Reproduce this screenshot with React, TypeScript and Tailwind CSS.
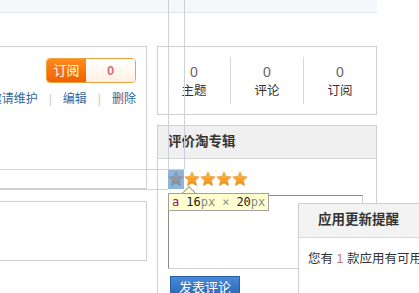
function Star({ gray }: { gray?: boolean }) {
  const id = gray ? "sg" : "so";
  return (
    <svg width="16" height="16" viewBox="0 0 16 16">
      <defs>
        <linearGradient id={id} x1="0" y1="0" x2="0" y2="1">
          <stop offset="0" stopColor={gray ? "#9aa6b0" : "#ffc04a"} />
          <stop offset="1" stopColor={gray ? "#7f8d99" : "#f38a10"} />
        </linearGradient>
      </defs>
      <path
        d="M8 0.8 L10.1 5.4 L15.2 5.9 L11.4 9.3 L12.5 14.6 L8 12 L3.5 14.6 L4.6 9.3 L0.8 5.9 L5.9 5.4 Z"
        fill={`url(#${id})`}
        stroke={gray ? "#7d8a95" : "#e58a1c"}
        strokeWidth="0.6"
      />
    </svg>
  );
}

const stats = [
  { n: "0", label: "主题" },
  { n: "0", label: "评论" },
  { n: "0", label: "订阅" },
];

export default function App() {
  return (
    <div
      className="relative w-[419px] h-[293px] overflow-hidden bg-white text-[12px] text-[#333]"
      style={{ fontFamily: '"Liberation Sans", "Noto Sans CJK SC", sans-serif' }}
    >
      <div className="h-[13px] w-[377px] bg-[#f5f7fa] border-b border-[#e3e7ec]" />

      <div className="flex mt-[33px]">
        {/* left column */}
        <div className="w-[147px] shrink-0">
          <div className="h-[144px] border-t border-r border-b-2 border-[#cfcfcf] pt-[11px] pr-[10px]">
            <div className="flex justify-end">
              <div className="flex h-[25px] w-[90px] rounded-[4px] overflow-hidden border border-[#f0a040]">
                <div className="w-[39px] flex items-center justify-center text-white text-[13px] bg-gradient-to-b from-[#ff8a1a] to-[#f06000]">
                  订阅
                </div>
                <div className="flex-1 flex items-center justify-center text-[13px] font-bold text-[#d97070] bg-gradient-to-b from-white to-[#fff1e4]">
                  0
                </div>
              </div>
            </div>
            <div className="flex justify-end items-center mt-[7px] text-[12px] text-[#336699] whitespace-nowrap">
              <span>邀请维护</span>
              <span className="mx-[11px] text-[#ccc]">|</span>
              <span>编辑</span>
              <span className="mx-[11px] text-[#ccc]">|</span>
              <span>删除</span>
            </div>
          </div>
          <div className="mt-[11px] h-[60px] border-t border-r border-b border-[#cfcfcf]" />
        </div>

        {/* right column */}
        <div className="ml-[10px] w-[220px] shrink-0">
          <div className="h-[69px] border border-[#cfcfcf] flex items-center">
            {stats.map((s, i) => (
              <div
                key={s.label}
                className={`flex-1 h-[47px] flex flex-col items-center justify-center pt-[4px] ${
                  i > 0 ? "border-l border-[#d8d8d8]" : ""
                }`}
              >
                <div className="text-[14px] text-[#666] leading-[18px]">{s.n}</div>
                <div className="text-[12.5px] leading-[21px] text-[#333]">{s.label}</div>
              </div>
            ))}
          </div>

          <div className="mt-[10px] h-[200px] border-l border-r border-t border-[#cfcfcf]">
            <div className="h-[33px] bg-[#f0f0f0] border-b border-[#d4d4d4] flex items-center pl-[10px] text-[13.5px] font-bold text-[#333]">
              评价淘专辑
            </div>
            <div className="pl-[10px] pt-[10px]">
              <div className="flex h-[20px]">
                <div className="w-[16px] h-[20px] bg-[#8fb4dc] flex items-center">
                  <Star gray />
                </div>
                {[0, 1, 2, 3].map((k) => (
                  <div key={k} className="w-[16px] h-[20px] flex items-center">
                    <Star />
                  </div>
                ))}
              </div>
              <div className="mt-[6px] w-[195px] h-[74px] border border-[#d0d0d0] border-t-[#8a8a8a] border-l-[#8a8a8a]" />
              <div className="mt-[7px] ml-[2px] w-[70px] h-[24px] flex items-center justify-center text-white text-[13px] bg-gradient-to-b from-[#4a8ad8] to-[#2560b0] border border-[#2a5ea8]">
                发表评论
              </div>
            </div>
          </div>
        </div>
      </div>

      {/* inspector guides */}
      <div className="absolute left-[168px] top-0 w-px h-[169px] bg-[#c9d2dc]" />
      <div className="absolute left-[184px] top-0 w-px h-[169px] bg-[#c9d2dc]" />
      <div className="absolute left-0 top-[169px] w-[184px] h-px bg-[#c9d2dc]" />
      <div className="absolute left-0 top-[189px] w-[168px] h-px bg-[#c9d2dc]" />

      {/* inspector tooltip */}
      <div className="absolute left-[184px] top-[188px] w-[10px] h-[10px] rotate-45 bg-[#ffffd0] border-l border-t border-[#a0a0a0]" />
      <div
        className="absolute left-[168px] top-[193px] h-[18px] px-[3px] flex items-center bg-[#ffffd0] border border-[#a0a0a0] text-[12px] whitespace-nowrap"
        style={{ fontFamily: '"DejaVu Sans Mono", monospace' }}
      >
        <span className="text-[#881280]">a</span>
        <span className="ml-[7px] text-[#222]">16</span>
        <span className="text-[#888]">px</span>
        <span className="mx-[7px] text-[#888]">×</span>
        <span className="text-[#222]">20</span>
        <span className="text-[#888]">px</span>
      </div>

      {/* update popup */}
      <div className="absolute left-[298px] top-[203px] w-[200px] h-[120px] bg-white border border-[#cfcfcf]">
        <div className="h-[34px] bg-[#f3f3f3] border-b border-[#d8d8d8] flex items-center pl-[19px] text-[13.5px] font-bold text-[#333]">
          应用更新提醒
        </div>
        <div className="pl-[9px] pt-[12px] text-[12.5px] text-[#333] whitespace-nowrap">
          您有 <span className="text-[#d07070]">1</span> 款应用有可用更新
        </div>
      </div>
    </div>
  );
}
